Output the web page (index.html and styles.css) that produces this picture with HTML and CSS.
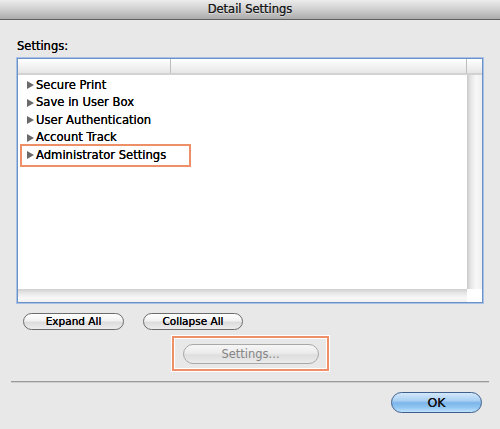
FILE: index.html
```html
<!DOCTYPE html>
<html>
<head>
<meta charset="utf-8">
<link rel="stylesheet" href="styles.css">
</head>
<body>
<div class="window">
  <div class="titlebar">Detail Settings</div>
  <div class="main">
    <div class="label">Settings:</div>
    <div class="list">
      <div class="list-header">
        <div class="col col-1"></div>
        <div class="col col-2"></div>
        <div class="col col-3"></div>
      </div>
      <div class="list-body">
        <div class="rows">
          <div class="row"><span class="tri"></span>Secure Print</div>
          <div class="row"><span class="tri"></span>Save in User Box</div>
          <div class="row"><span class="tri"></span>User Authentication</div>
          <div class="row"><span class="tri"></span>Account Track</div>
          <div class="row row-marked"><span class="tri"></span>Administrator Settings<span class="mark"></span></div>
        </div>
        <div class="vscroll"></div>
      </div>
      <div class="list-footer">
        <div class="hscroll"></div>
        <div class="corner"></div>
      </div>
    </div>
    <div class="btn-row">
      <button class="btn btn-expand">Expand All</button>
      <button class="btn btn-collapse">Collapse All</button>
    </div>
    <div class="settings-wrap">
      <button class="btn btn-settings" disabled>Settings...</button>
    </div>
    <div class="separator"></div>
    <div class="ok-row">
      <button class="btn-ok">OK</button>
    </div>
  </div>
</div>
</body>
</html>
```
FILE: styles.css
```css
* { box-sizing: border-box; }
html, body { margin: 0; padding: 0; }
body {
  width: 500px;
  height: 429px;
  background: #e8e8e8;
  font-family: "DejaVu Sans", sans-serif;
  overflow: hidden;
}
.window {
  width: 500px;
  height: 429px;
  background: #e8e8e8;
  display: flex;
  flex-direction: column;
}
.titlebar {
  height: 20px;
  border-bottom: 1px solid #5f5f5f;
  background: linear-gradient(#ececec, #cfcfcf 50%, #ababab);
  color: #1a1a1a;
  font-size: 11.5px;
  line-height: 19px;
  text-align: center;
  text-shadow: 0 1px 0 rgba(255,255,255,0.45), 0 0 0.2px #1a1a1a;
}
.main {
  display: flex;
  flex-direction: column;
  padding: 0 17px;
}
.label {
  margin-top: 19px;
  font-size: 11.5px;
  line-height: 14px;
  color: #000;
  text-shadow: 0 0 0.15px #000;
}
.list {
  margin-top: 5px;
  height: 245px;
  border: 1px solid #6a92c9;
  box-shadow: 0 0 0 1px #a8c1e4;
  background: #fff;
  display: flex;
  flex-direction: column;
}
.list-header {
  height: 16px;
  display: flex;
  background: linear-gradient(#ffffff, #f4f4f4 45%, #e6e6e6);
  border-bottom: 2px solid #d2d2d2;
}
.col { height: 100%; }
.col-1 { width: 153px; border-right: 1px solid #bdbdbd; }
.col-2 { width: 296px; border-right: 1px solid #bdbdbd; }
.col-3 { flex: 1; }
.list-body {
  flex: 1;
  display: flex;
}
.rows {
  flex: 1;
  padding-top: 1.5px;
}
.vscroll {
  width: 15px;
  background: linear-gradient(90deg, #c9c9c9, #e6e6e6 25%, #f8f8f8 60%, #efefef);
}
.list-footer {
  height: 13px;
  display: flex;
}
.hscroll {
  flex: 1;
  background: linear-gradient(#cfcfcf, #e6e6e6 30%, #f8f8f8 70%, #f0f0f0);
}
.corner {
  width: 15px;
  background: #fff;
}
.row {
  position: relative;
  height: 17.5px;
  line-height: 17px;
  font-size: 11.6px;
  color: #000;
  padding-left: 9px;
  display: flex;
  align-items: center;
  text-shadow: 0 0 0.15px #000;
}
.tri {
  width: 0;
  height: 0;
  border-top: 4.5px solid transparent;
  border-bottom: 4.5px solid transparent;
  border-left: 7px solid #6a6a6a;
  margin-right: 2px;
}
.mark {
  position: absolute;
  left: 2px;
  top: -3px;
  width: 171px;
  height: 23px;
  border: 2px solid #ef8f68;
  box-shadow: inset 0 0 0 1px #fff, 0 0 0 1px #fff;
}
.btn-row {
  margin-top: 10px;
  padding-left: 6px;
  display: flex;
  gap: 19px;
}
.btn {
  height: 17px;
  border: 1px solid #6c6c6c;
  border-radius: 9px;
  background: linear-gradient(#ffffff, #f2f2f2 45%, #dcdcdc 55%, #ededed);
  font-family: "DejaVu Sans", sans-serif;
  font-size: 10.5px;
  line-height: 15px;
  color: #000;
  padding: 0;
  text-align: center;
  text-shadow: 0 0 0.2px #000;
}
.btn-expand { width: 101px; }
.btn-collapse { width: 100px; }
.settings-wrap {
  margin-top: 6px;
  margin-left: 155px;
  width: 157px;
  height: 35px;
  border: 2px solid #ef8f68;
  box-shadow: inset 0 0 0 1px #fff, 0 0 0 1px #fff;
  display: flex;
  align-items: center;
  justify-content: center;
}
.btn-settings {
  width: 136px;
  height: 20px;
  border-radius: 10px;
  border-color: #a8a8a8;
  background: linear-gradient(#f6f6f6, #ececec 45%, #dedede 55%, #ebebeb);
  color: #858585;
  font-size: 11.5px;
  line-height: 18px;
  text-shadow: none;
}
.separator {
  margin-top: 10px;
  margin-left: -6px;
  margin-right: -6px;
  height: 2px;
  border-top: 1px solid #9a9a9a;
  border-bottom: 1px solid #cfcfcf;
}
.ok-row {
  margin-top: 9px;
  display: flex;
  justify-content: flex-end;
  padding-right: 1px;
}
.btn-ok {
  width: 91px;
  height: 21px;
  border: 1px solid #3f5f8c;
  border-radius: 11px;
  background: linear-gradient(#d4e8fb, #a9d0f3 40%, #7db5ea 52%, #8fc5f2 75%, #bfe2fb);
  font-family: "DejaVu Sans", sans-serif;
  font-size: 12.5px;
  line-height: 19px;
  color: #111;
  padding: 0;
  text-shadow: 0 0 0.3px #111;
}
```
